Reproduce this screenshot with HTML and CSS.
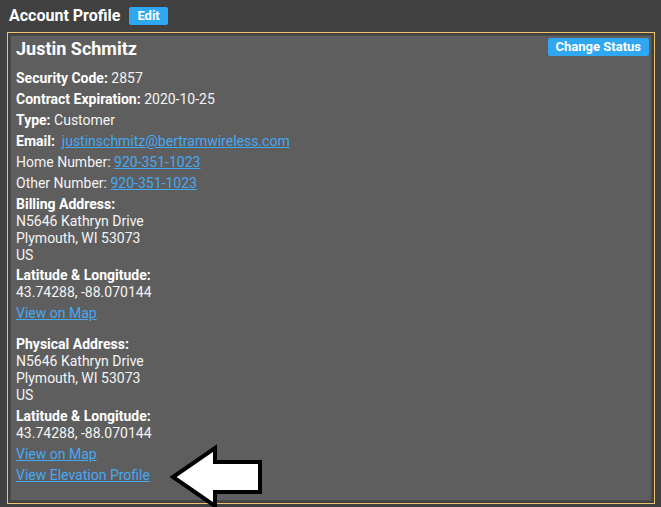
FILE: index.html
```html
<!DOCTYPE html>
<html>
<head>
<meta charset="utf-8">
<link rel="stylesheet" href="styles.css">
</head>
<body>
<div class="page">
  <div class="topbar">
    <h1 class="title">Account Profile</h1>
    <button class="btn btn-edit">Edit</button>
  </div>
  <div class="frame">
    <div class="panel">
      <div class="panel-head">
        <h2 class="name">Justin Schmitz</h2>
        <button class="btn btn-status">Change Status</button>
      </div>
      <div class="info">
        <div class="row"><b>Security Code:</b> 2857</div>
        <div class="row gap4"><b>Contract Expiration:</b> 2020-10-25</div>
        <div class="row gap4"><b>Type:</b> Customer</div>
        <div class="row gap4"><b>Email:</b>&nbsp; <a href="#">justinschmitz@bertramwireless.com</a></div>
        <div class="row gap4">Home Number: <a href="#">920-351-1023</a></div>
        <div class="row gap4">Other Number: <a href="#">920-351-1023</a></div>
        <div class="block gap4">
          <div class="row"><b>Billing Address:</b></div>
          <div class="row">N5646 Kathryn Drive</div>
          <div class="row">Plymouth, WI 53073</div>
          <div class="row">US</div>
        </div>
        <div class="block gap3">
          <div class="row"><b>Latitude &amp; Longitude:</b></div>
          <div class="row">43.74288, -88.070144</div>
        </div>
        <div class="row gap4"><a href="#">View on Map</a></div>
        <div class="block gap14">
          <div class="row"><b>Physical Address:</b></div>
          <div class="row">N5646 Kathryn Drive</div>
          <div class="row">Plymouth, WI 53073</div>
          <div class="row">US</div>
        </div>
        <div class="block gap4">
          <div class="row"><b>Latitude &amp; Longitude:</b></div>
          <div class="row">43.74288, -88.070144</div>
        </div>
        <div class="row gap4"><a href="#">View on Map</a></div>
        <div class="row gap4"><a href="#">View Elevation Profile</a></div>
      </div>
    </div>
  </div>
  <svg class="arrow" width="110" height="75" viewBox="0 0 110 75">
    <polygon points="8,37 50,8 50,22 95,22 95,52 50,52 50,66" fill="#ffffff" stroke="#000000" stroke-width="4" stroke-linejoin="miter"/>
  </svg>
</div>
</body>
</html>
```

FILE: styles.css
```css
html, body {
  margin: 0;
  padding: 0;
  background: #414141;
}
body {
  font-family: Roboto, "Noto Sans", sans-serif;
  color: #ffffff;
  width: 661px;
  height: 507px;
  overflow: hidden;
}
.page {
  position: relative;
  padding: 7px 6px 0 7px;
}
.topbar {
  display: flex;
  align-items: center;
  height: 18px;
  padding-left: 2px;
  margin-bottom: 7px;
}
.title {
  margin: 0;
  font-size: 16px;
  font-weight: 700;
  line-height: 18px;
  color: #ffffff;
}
.btn {
  border: none;
  background: #2fa7f1;
  color: #ffffff;
  font-family: Roboto, "Noto Sans", sans-serif;
  font-weight: 700;
  font-size: 13px;
  height: 18px;
  line-height: 18px;
  padding: 0 9px;
  border-radius: 2px;
  cursor: pointer;
}
.btn-edit {
  margin-left: 9px;
  padding: 0 8px;
}
.frame {
  border: 1px solid #ecc46c;
  padding: 2px;
  background: #414141;
}
.panel {
  border: 1px solid #4c4c4c;
  background: #5e5e5e;
  padding: 0 2px 16px 5px;
}
.panel-head {
  display: flex;
  justify-content: space-between;
  align-items: flex-start;
  height: 22px;
  margin-bottom: 12px;
}
.name {
  margin: 0;
  padding-top: 2px;
  font-size: 18px;
  font-weight: 700;
  line-height: 22px;
  color: #ffffff;
}
.btn-status {
  margin-top: 2px;
  padding: 0 8px;
}
.info {
  font-size: 14px;
  line-height: 17px;
  color: #f4f4f4;
}
.info b {
  font-weight: 700;
  color: #ffffff;
}
.info a {
  color: #45a9f4;
  text-decoration: underline;
}
.gap3 { margin-top: 3px; }
.gap4 { margin-top: 4px; }
.gap14 { margin-top: 14px; }
.arrow {
  position: absolute;
  left: 165px;
  top: 440px;
  overflow: visible;
}
```
